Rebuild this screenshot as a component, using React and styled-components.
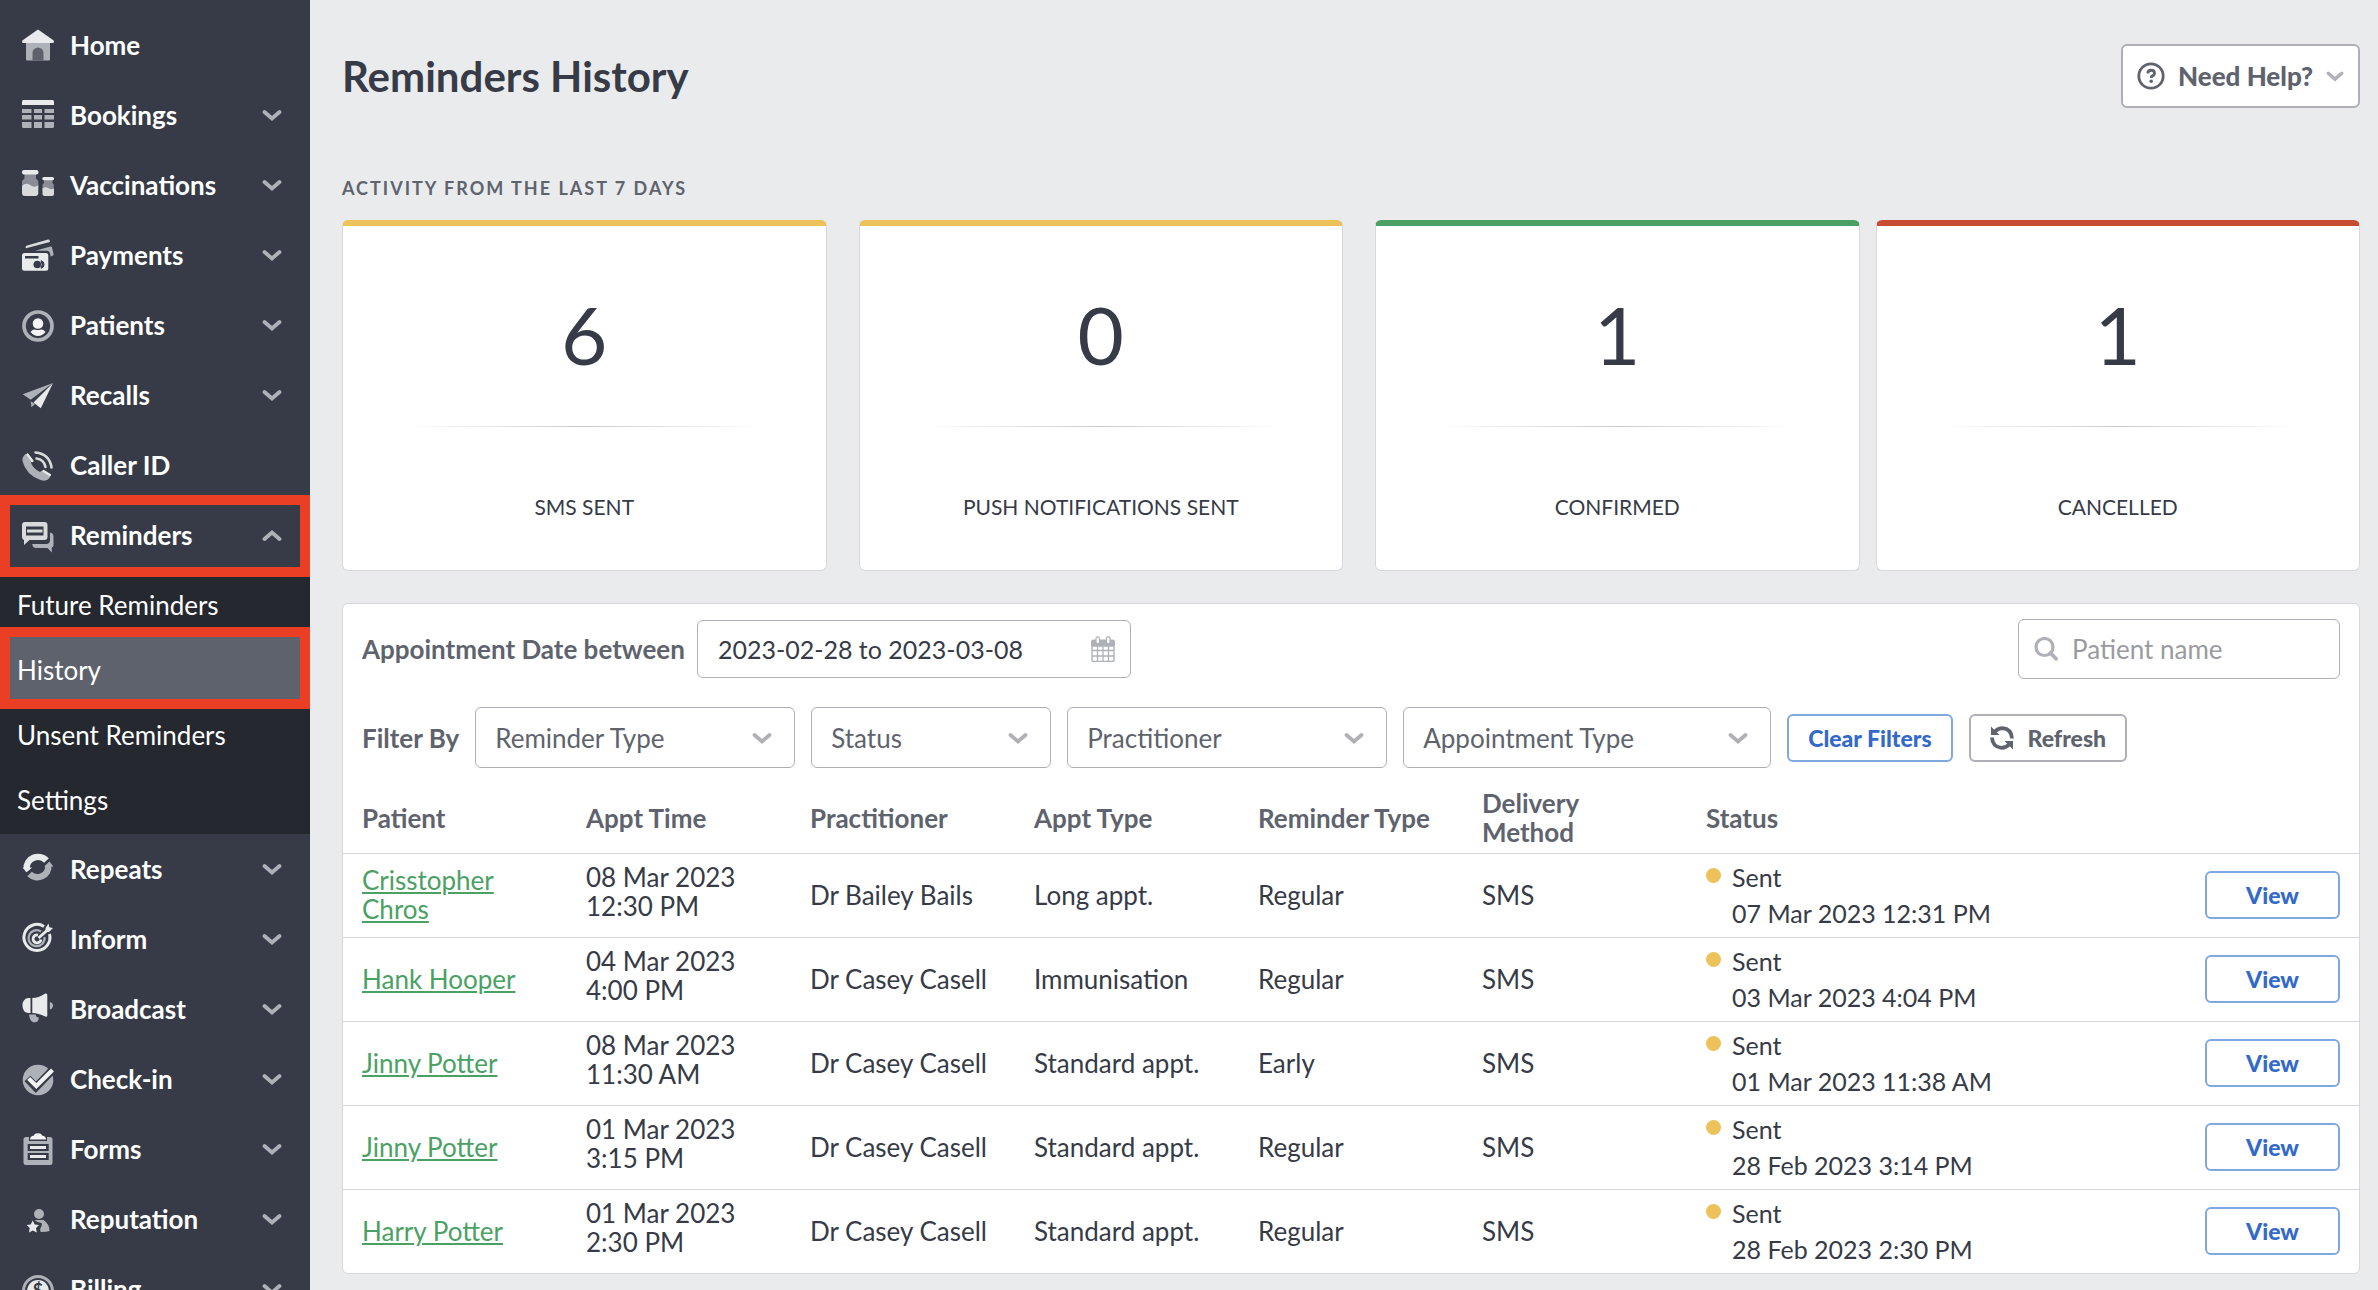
import React from 'react';
import styled, { createGlobalStyle, ThemeProvider } from 'styled-components';

const theme = {
  colors: {
    page: '#e9ebed',
    sidebar: '#363b47',
    submenu: '#25282f',
    active: '#5e626d',
    text: '#363b47',
    muted: '#5e636e',
    placeholder: '#999b9f',
    border: '#aeb0b6',
    line: '#d6d8db',
    blue: '#3369c9',
    blueBorder: '#7fa7e0',
    green: '#4ba164',
    yellow: '#edc25a',
    red: '#c64d31',
    marker: '#eb3f25',
    iconLight: '#e9eaec',
    iconMid: '#afb1b8',
  },
  sizes: {
    title: '42px',
    number: '80px',
    text: '26px',
    date: '25px',
    button: '23px',
    label: '21px',
    caption: '18px',
  },
};

const light = theme.colors.iconLight;
const mid = theme.colors.iconMid;
const dark = theme.colors.sidebar;

const icons = {
  home: (
    <>
      <path d="M4 13h24v17.5q0 1-1 1H5q-1 0-1-1z" fill={mid} />
      <path d="M10.5 31.5V24a5.5 5.5 0 0 1 11 0v7.5z" fill={theme.colors.active} />
      <path d="M16 .5 31 11q1 .7 1 1.5 0 1.5-1.5 1.5h-29Q0 14 0 12.500 0 11.700 1 11z" fill={light} />
    </>
  ),
  bookings: (
    <>
      <path d="M1.5 1h29Q32 1 32 2.500V6H0V2.500Q0 1 1.500 1z" fill={light} />
      <path
        d="M0 10h9.500v4H0zM12 10h8v4h-8zM22.500 10H32v4h-9.500zM0 16h9.500v4.500H0zM12 16h8v4.500h-8zM22.500 16H32v4.500h-9.500zM0 23h9.500v6H1.500Q0 29 0 27.500zM12 23h8v6h-8zM22.500 23H32v4.500q0 1.500-1.500 1.500h-8z"
        fill={mid}
      />
    </>
  ),
  vaccinations: (
    <>
      <path d="M2.500 4h11.500v5.500l2.300 2.500v6H0v-6l2.500-2.500z" fill="#8a8d96" />
      <path d="M0 17q4-4 8-1 4 3 8.300.5V24q0 3-3 3H3q-3 0-3-3z" fill="#d8dadc" />
      <rect x="0" y="1" width="16.500" height="4.500" rx="2" fill={light} />
      <path d="M22 10h8.500v4l1.300 1.500V22H20.500v-6.500L22 14z" fill="#8a8d96" />
      <path d="M20.500 19.500q3-2 5.500-.5 3 2 6 .5V25q0 2-2 2h-7.500q-2 0-2-2z" fill="#d8dadc" />
      <rect x="20.300" y="8" width="11.700" height="3.300" rx="1.500" fill={light} />
    </>
  ),
  payments: (
    <>
      <path d="M3.500 8.500q0-1.500 1.500-2L26 .5q1.500-.3 1.700 1.300L28 3 4 9.300z" fill="#d8dadc" />
      <path d="M13 11.700 28.500 7.500q1.200-.3 1.500 1l1.500 6.500q.3 1.500-1 1.800l-2 .6q0-5.700-4-5.700z" fill={mid} />
      <rect x="0" y="14" width="26.300" height="17.700" rx="2.500" fill={light} />
      <rect x="3" y="17" width="13.500" height="2.500" fill={dark} />
      <circle cx="15.300" cy="25.500" r="3.800" fill={dark} />
      <path d="M19 21.700a3.900 3.900 0 0 1 0 7.600q2.300-3.800 0-7.600z" fill={dark} stroke={dark} />
    </>
  ),
  patients: (
    <>
      <circle cx="16" cy="17" r="14" fill="none" stroke={mid} strokeWidth="3.700" />
      <circle cx="16" cy="14.500" r="5.300" fill="#f4f4f6" />
      <path d="M8.500 23q2.500-3 5-2.300 2.500.7 5 0 2.500-.7 5 2.300-3.300 4-7.500 4t-7.500-4z" fill="#f4f4f6" />
    </>
  ),
  recalls: (
    <>
      <path d="M31 4 .7 15.300l8 5.500z" fill={mid} />
      <path d="M8.700 22.300 13 25l-3.500 3.300z" fill={mid} />
      <path d="M31 4 11.500 23.500l7.300 5.800z" fill={light} />
    </>
  ),
  caller: (
    <>
      <path
        d="M2 6.500Q4.500 3.500 6.500 6L10 10.500q1 1.500-1 3.500 2.500 6 9 9 2-2 4-1l5 3q2 1.500.5 4-3 4-9 2Q4 26 .5 12 0 8.500 2 6.500z"
        fill={mid}
      />
      <path d="m5.500 5.500 5 6.500M21.500 22l6.500 4" stroke={light} strokeWidth="2.200" strokeLinecap="round" />
      <path d="M14.500 9.500q7.500 1 9 8.500M13.500 3.500Q27.500 5 29.500 18.500" stroke="#d8dadc" strokeWidth="2.600" fill="none" strokeLinecap="round" />
    </>
  ),
  reminders: (
    <>
      <path d="M28 13.500q3.500.5 3.500 4V26q0 2-1.700 2.500v5L25.500 29H14q-3.500 0-3.700-4H24q4 0 4-4z" fill={mid} />
      <path d="M3 3h19.500q3 0 3 3v12q0 3-3 3H7.500L2 26v-5q-2-.5-2-3V6q0-3 3-3z" fill="#d8dadc" />
      <rect x="4" y="7.500" width="17.500" height="9" fill={dark} />
      <rect x="5" y="10.500" width="15.500" height="3" fill="#d8dadc" />
    </>
  ),
  repeats: (
    <>
      <path d="M4.800 15.500A11.300 10.500 0 0 1 24.500 7.500" stroke={light} strokeWidth="6.500" fill="none" />
      <path d="M26.300 12.500A11 10.500 0 0 1 7.500 21" stroke={mid} strokeWidth="6.500" fill="none" />
      <path d="M.5 14.500h9.500L5 20z" fill={light} />
      <path d="M22 13.500h9.500L27 8z" fill={mid} />
      <path d="m4 20.500 6.500-5M21.500 13l6.500-6" stroke={dark} strokeWidth="1.500" />
    </>
  ),
  inform: (
    <>
      <path d="M22 3.500A13 13 0 1 0 27.500 11" stroke={light} strokeWidth="3" fill="none" />
      <path d="M19 8.500A8 8 0 1 0 22.500 14" stroke={mid} strokeWidth="2.200" fill="none" />
      <path d="M16 12a4 4 0 1 0 3 4.500" stroke={light} strokeWidth="2.800" fill="none" />
      <path d="m16.500 15 9-8" stroke={light} strokeWidth="3" />
      <path d="m23.500 5 3-4.500.8 3.800 3.700.7L27 9h-3.500z" fill={light} />
    </>
  ),
  broadcast: (
    <>
      <path d="M8.500 5v15H6Q.5 19 .5 12.500T6 5z" fill={light} />
      <path d="M10.300 5q6 0 13-4.500Q25.300 0 25.300 2v20.500q0 1.800-2 1Q16 20 10.300 20z" fill={light} />
      <path d="M27.800 9q3.200.5 3.200 3.500t-3.200 4z" fill={mid} />
      <path d="M7 21.500h6.500q.3 2.500 3.200 3 .3 5-4.200 5Q8 29.500 7 21.500z" fill={mid} />
    </>
  ),
  checkin: (
    <>
      <circle cx="16" cy="17" r="15.300" fill={mid} />
      <path d="m5.500 15.500 8.300 8.700L31.500 6" stroke={dark} strokeWidth="8" fill="none" />
      <path d="m6.700 15.500 7.600 7.500L30.500 7" stroke="#f4f4f6" strokeWidth="4.200" fill="none" />
    </>
  ),
  forms: (
    <>
      <rect x="1.500" y="4" width="29" height="28" rx="2.500" fill={mid} />
      <path d="M7 3h18v5H7z" fill={dark} />
      <path d="M8 6.500q0-3.500 4-4Q12.500.3 16 .3t4 2.200q4 .5 4 4z" fill="#f4f4f6" />
      <path d="M5.700 11h21v7h-21zM5.700 20h21v7h-21z" fill={dark} />
      <path d="M8 13h16v3H8zM8 22h16v3H8z" fill={light} />
    </>
  ),
  reputation: (
    <>
      <circle cx="17" cy="11" r="5" fill={mid} />
      <path d="M12.500 17h9q6 4 6 11-2.500 1-8 1-2 0-1-4 2-3.500 1-5l-4-1z" fill={mid} />
      <path d="m10.700 17.500 2 4 4.300.6-3 3 .8 4.400-4-2-3.800 2 .7-4.400-3-3 4-.6z" fill={light} />
    </>
  ),
  billing: (
    <>
      <circle cx="16" cy="18" r="14.500" fill="none" stroke={mid} strokeWidth="3" />
      <circle cx="16" cy="18" r="11" fill={light} />
      <text x="16" y="24" textAnchor="middle" fontSize="18" fontWeight="700" fontFamily="Lato" fill={dark}>
        $
      </text>
    </>
  ),
};

const menu = [
  { label: 'Home', icon: 'home' },
  { label: 'Bookings', icon: 'bookings', expandable: true },
  { label: 'Vaccinations', icon: 'vaccinations', expandable: true },
  { label: 'Payments', icon: 'payments', expandable: true },
  { label: 'Patients', icon: 'patients', expandable: true },
  { label: 'Recalls', icon: 'recalls', expandable: true },
  { label: 'Caller ID', icon: 'caller' },
  {
    label: 'Reminders',
    icon: 'reminders',
    expandable: true,
    open: true,
    items: ['Future Reminders', 'History', 'Unsent Reminders', 'Settings'],
  },
  { label: 'Repeats', icon: 'repeats', expandable: true },
  { label: 'Inform', icon: 'inform', expandable: true },
  { label: 'Broadcast', icon: 'broadcast', expandable: true },
  { label: 'Check-in', icon: 'checkin', expandable: true },
  { label: 'Forms', icon: 'forms', expandable: true },
  { label: 'Reputation', icon: 'reputation', expandable: true },
  { label: 'Billing', icon: 'billing', expandable: true },
];

const stats = [
  { value: 6, label: 'SMS sent', color: 'yellow' },
  { value: 0, label: 'Push notifications sent', color: 'yellow' },
  { value: 1, label: 'Confirmed', color: 'green' },
  { value: 1, label: 'Cancelled', color: 'red' },
];

const filters = [
  { label: 'Reminder Type', width: 320 },
  { label: 'Status', width: 240 },
  { label: 'Practitioner', width: 320 },
  { label: 'Appointment Type', width: 368 },
];

const columns = ['Patient', 'Appt Time', 'Practitioner', 'Appt Type', 'Reminder Type', 'Delivery Method', 'Status'];

const rows = [
  ['Crisstopher Chros', '08 Mar 2023', '12:30 PM', 'Dr Bailey Bails', 'Long appt.', 'Regular', '07 Mar 2023 12:31 PM'],
  ['Hank Hooper', '04 Mar 2023', '4:00 PM', 'Dr Casey Casell', 'Immunisation', 'Regular', '03 Mar 2023 4:04 PM'],
  ['Jinny Potter', '08 Mar 2023', '11:30 AM', 'Dr Casey Casell', 'Standard appt.', 'Early', '01 Mar 2023 11:38 AM'],
  ['Jinny Potter', '01 Mar 2023', '3:15 PM', 'Dr Casey Casell', 'Standard appt.', 'Regular', '28 Feb 2023 3:14 PM'],
  ['Harry Potter', '01 Mar 2023', '2:30 PM', 'Dr Casey Casell', 'Standard appt.', 'Regular', '28 Feb 2023 2:30 PM'],
];

const GlobalStyle = createGlobalStyle`
  * {
    box-sizing: border-box;
  }

  body {
    margin: 0;
    background: ${theme.colors.page};
    color: ${theme.colors.text};
    font-family: Lato, sans-serif;
    font-size: ${theme.sizes.text};
  }

  button, input, select {
    font-family: inherit;
    font-size: inherit;
    color: inherit;
  }
`;

const Layout = styled.div`
  display: flex;
  height: 100vh;
`;

const Sidebar = styled.nav`
  flex: none;
  width: 310px;
  padding-top: 10px;
  overflow: hidden;
  background: ${({ theme }) => theme.colors.sidebar};
`;

const MenuList = styled.ul`
  margin: 0;
  padding: 0;
  list-style: none;
`;

const MenuButton = styled.button`
  position: relative;
  display: flex;
  align-items: center;
  gap: 16px;
  width: 100%;
  height: 70px;
  padding: 0 28px 0 22px;
  border: 0;
  background: none;
  color: #fff;
  font-size: ${({ theme }) => theme.sizes.text};
  font-weight: 700;
  text-align: left;
  cursor: pointer;
`;

const MenuLabel = styled.span`
  flex: 1;
`;

const MenuIcon = styled.svg`
  flex: none;
  width: 32px;
  height: 32px;
  overflow: visible;
`;

const Submenu = styled.ul`
  margin: 0;
  padding: 2px 0;
  list-style: none;
  background: ${({ theme }) => theme.colors.submenu};
`;

const SubmenuLink = styled.a`
  position: relative;
  display: flex;
  align-items: center;
  height: 65px;
  padding: 0 17px;
  background: ${({ theme, $active }) => ($active ? theme.colors.active : 'none')};
  color: #fff;
  text-decoration: none;
`;

const Marker = styled.span`
  position: absolute;
  z-index: 1;
  top: ${({ $top }) => $top}px;
  left: 0;
  right: 0;
  height: 82px;
  border: 10px solid ${({ theme }) => theme.colors.marker};
`;

const SubmenuText = styled.span`
  position: relative;
  z-index: 2;
`;

const Main = styled.main`
  flex: 1;
  min-width: 0;
  padding: 44px 18px 0 32px;
  overflow: auto;
`;

const Header = styled.header`
  display: flex;
  align-items: center;
  justify-content: space-between;
`;

const Title = styled.h1`
  margin: 0;
  font-size: ${({ theme }) => theme.sizes.title};
  font-weight: 700;
  line-height: 64px;
`;

const Button = styled.button`
  display: flex;
  align-items: center;
  justify-content: center;
  gap: 14px;
  height: 48px;
  padding: 0 19px;
  border: 2px solid ${({ theme, $blue }) => ($blue ? theme.colors.blueBorder : theme.colors.border)};
  border-radius: 6px;
  background: #fff;
  color: ${({ theme, $blue }) => ($blue ? theme.colors.blue : theme.colors.muted)};
  font-size: ${({ theme }) => theme.sizes.button};
  font-weight: 900;
  cursor: pointer;
`;

const HelpButton = styled(Button)`
  gap: 13px;
  height: 64px;
  padding: 0 14px;
  font-size: ${({ theme }) => theme.sizes.text};
`;

const ViewButton = styled(Button)`
  width: 135px;
  margin-left: auto;
`;

const SectionTitle = styled.h2`
  margin: 68px 0 20px;
  color: ${({ theme }) => theme.colors.muted};
  font-size: ${({ theme }) => theme.sizes.caption};
  font-weight: 700;
  letter-spacing: 2px;
  line-height: 24px;
  text-transform: uppercase;
`;

const Stats = styled.section`
  display: flex;
  gap: 16px;
`;

const Card = styled.article`
  display: flex;
  flex: 1 1 0;
  flex-direction: column;
  align-items: center;
  padding: 0 60px;
  border: 1px solid ${({ theme }) => theme.colors.line};
  border-top: 6px solid ${({ theme, $color }) => theme.colors[$color]};
  border-radius: 6px;
  background: #fff;

  &:nth-child(-n + 2) {
    margin-right: 16px;
  }
`;

const CardValue = styled.div`
  padding: 58px 0 42px;
  font-size: ${({ theme }) => theme.sizes.number};
  line-height: 100px;
`;

const Divider = styled.div`
  width: 100%;
  height: 1px;
  background: linear-gradient(90deg, transparent, #c9cbce, transparent);
`;

const CardLabel = styled.div`
  padding: 64px 0 47px;
  font-size: ${({ theme }) => theme.sizes.label};
  line-height: 32px;
  text-transform: uppercase;
`;

const Panel = styled.section`
  margin-top: 32px;
  border: 1px solid ${({ theme }) => theme.colors.line};
  border-radius: 6px;
  background: #fff;
`;

const Toolbar = styled.div`
  display: flex;
  align-items: center;
  gap: ${({ $spaced }) => ($spaced ? 16 : 12)}px;
  padding: ${({ $spaced }) => ($spaced ? '28px 19px 16px' : '15px 19px 0')};
`;

const FieldLabel = styled.label`
  color: ${({ theme }) => theme.colors.muted};
  font-weight: 700;
`;

const Field = styled.div`
  display: flex;
  align-items: center;
  gap: 14px;
  width: ${({ $width }) => $width}px;
  height: ${({ $height }) => $height}px;
  padding: 0 15px;
  border: 1px solid ${({ theme }) => theme.colors.border};
  border-radius: 6px;
`;

const SearchField = styled(Field)`
  margin-left: auto;
`;

const TextInput = styled.input`
  flex: 1;
  min-width: 0;
  padding: 0 5px;
  border: 0;
  outline: 0;
  background: none;
  font-size: ${({ theme }) => theme.sizes.date};

  &::placeholder {
    color: ${({ theme }) => theme.colors.placeholder};
    opacity: 1;
  }
`;

const SearchInput = styled(TextInput)`
  padding: 0;
  font-size: ${({ theme }) => theme.sizes.text};
`;

const SelectBox = styled.div`
  display: grid;
  align-items: center;
  width: ${({ $width }) => $width}px;

  > * {
    grid-area: 1 / 1;
  }

  > svg {
    justify-self: end;
    margin-right: 23px;
    pointer-events: none;
  }
`;

const Select = styled.select`
  width: 100%;
  height: 61px;
  padding: 0 19px;
  border: 1px solid ${({ theme }) => theme.colors.border};
  border-radius: 6px;
  background: #fff;
  color: ${({ theme }) => theme.colors.muted};
  appearance: none;
`;

const Table = styled.table`
  width: 100%;
  border-collapse: collapse;
  table-layout: fixed;
`;

const Th = styled.th`
  width: ${({ $wide }) => ($wide ? 'auto' : '224px')};
  height: 69px;
  padding: 0 64px 0 0;
  color: ${({ theme }) => theme.colors.muted};
  font-weight: 700;
  line-height: 29px;
  text-align: left;
  white-space: ${({ $wrap }) => ($wrap ? 'normal' : 'nowrap')};

  &:first-child {
    width: 243px;
    padding-left: 19px;
  }
`;

const Td = styled.td`
  height: 84px;
  padding: 0 19px 0 0;
  border-top: 1px solid ${({ theme }) => theme.colors.line};
  line-height: 29px;

  &:first-child {
    padding: 0 60px 0 19px;
  }
`;

const TimeCell = styled(Td)`
  padding-bottom: 7px;
`;

const PatientLink = styled.a`
  color: ${({ theme }) => theme.colors.green};
  text-decoration: underline;
`;

const Status = styled.div`
  display: flex;
  gap: 11px;
  font-size: ${({ theme }) => theme.sizes.date};
  line-height: 36px;
`;

const Dot = styled.span`
  flex: none;
  width: 15px;
  height: 15px;
  margin-top: 9px;
  border-radius: 50%;
  background: ${({ theme }) => theme.colors.yellow};
`;

const Chevron = ({ up = false, size = 20 }) => (
  <svg width={size} height={size} viewBox="0 0 20 20" aria-hidden="true">
    <path
      d={up ? 'M2.500 14 10 7.500l7.500 6.500' : 'M2.500 7 10 13.500 17.500 7'}
      fill="none"
      stroke={mid}
      strokeWidth="3.800"
      strokeLinecap="round"
    />
  </svg>
);

const HelpIcon = () => (
  <svg width="28" height="28" viewBox="0 0 28 28" fill="none" stroke="currentColor" aria-hidden="true">
    <circle cx="14" cy="14" r="12.200" strokeWidth="2.800" />
    <path d="M10.800 11.300Q11 8.300 14.200 8.300T17.500 11.200Q17.500 13 15.500 13.800 14.200 14.400 14.200 16" strokeWidth="2.900" />
    <circle cx="14.200" cy="19.300" r="1.800" fill="currentColor" stroke="none" />
  </svg>
);

const CalendarIcon = () => (
  <svg width="24" height="26" viewBox="0 0 24 26" fill="none" stroke={mid} aria-hidden="true">
    <path d="M1 10h22v14q0 1.500-1.500 1.500h-19Q1 25.500 1 24z" strokeWidth="1.400" />
    <path d="M0 10V6q0-2.500 2.500-2.500h19Q24 3.500 24 6v4z" fill={mid} stroke="none" />
    <path d="M1 14.500h22M1 20h22M6.500 10v15M12 10v15M17.500 10v15" strokeWidth="1.300" />
    <rect x="5" y=".8" width="3.500" height="7" rx="1.700" fill="#fff" strokeWidth="1.200" />
    <rect x="15.500" y=".8" width="3.500" height="7" rx="1.700" fill="#fff" strokeWidth="1.200" />
  </svg>
);

const SearchIcon = () => (
  <svg width="24" height="24" viewBox="0 0 24 24" fill="none" stroke={mid} aria-hidden="true">
    <circle cx="10.500" cy="10" r="8.500" strokeWidth="3.200" />
    <path d="m16.500 16 5.500 5.800" strokeWidth="3.800" strokeLinecap="round" />
  </svg>
);

const RefreshIcon = () => (
  <svg width="24" height="24" viewBox="0 0 24 24" fill="none" stroke="currentColor" aria-hidden="true">
    <path d="M5 5.500Q8 2.200 12.500 2.200 21.500 3 22 12.500M19 18.500q-3 3.300-7.500 3.300Q2.500 21 2 11.500" strokeWidth="3.800" />
    <path d="M1 .5V9h8.500zM23 23.500V15h-8.500z" fill="currentColor" stroke="none" />
  </svg>
);

const SideMenu = () => (
  <Sidebar>
    <MenuList>
      {menu.map(({ label, icon, expandable, open, items }) => (
        <li key={label}>
          <MenuButton type="button">
            <MenuIcon viewBox="0 0 32 32" aria-hidden="true">
              {icons[icon]}
            </MenuIcon>
            <MenuLabel>{label}</MenuLabel>
            {expandable && <Chevron up={open} />}
            {open && <Marker $top={-5} />}
          </MenuButton>
          {items && (
            <Submenu>
              {items.map((item) => (
                <li key={item}>
                  <SubmenuLink href="#" $active={item === 'History'}>
                    {item === 'History' && <Marker $top={-10} />}
                    <SubmenuText>{item}</SubmenuText>
                  </SubmenuLink>
                </li>
              ))}
            </Submenu>
          )}
        </li>
      ))}
    </MenuList>
  </Sidebar>
);

const RemindersTable = () => (
  <Table>
    <thead>
      <tr>
        {columns.map((column) => (
          <Th key={column} $wide={column === 'Status'} $wrap={column === 'Delivery Method'}>
            {column}
          </Th>
        ))}
        <Th aria-label="Actions" />
      </tr>
    </thead>
    <tbody>
      {rows.map(([patient, date, time, practitioner, type, reminder, sent]) => (
        <tr key={sent}>
          <Td>
            <PatientLink href="#">{patient}</PatientLink>
          </Td>
          <TimeCell>
            {date}
            <br />
            {time}
          </TimeCell>
          <Td>{practitioner}</Td>
          <Td>{type}</Td>
          <Td>{reminder}</Td>
          <Td>SMS</Td>
          <Td>
            <Status>
              <Dot />
              <div>
                Sent
                <br />
                {sent}
              </div>
            </Status>
          </Td>
          <Td>
            <ViewButton type="button" $blue>
              View
            </ViewButton>
          </Td>
        </tr>
      ))}
    </tbody>
  </Table>
);

const App = () => {
  return (
    <ThemeProvider theme={theme}>
      <GlobalStyle />
      <Layout>
        <SideMenu />
        <Main>
          <Header>
            <Title>Reminders History</Title>
            <HelpButton type="button">
              <HelpIcon />
              Need Help?
              <Chevron size={18} />
            </HelpButton>
          </Header>
          <SectionTitle>Activity from the last 7 days</SectionTitle>
          <Stats>
            {stats.map(({ value, label, color }) => (
              <Card key={label} $color={color}>
                <CardValue>{value}</CardValue>
                <Divider />
                <CardLabel>{label}</CardLabel>
              </Card>
            ))}
          </Stats>
          <Panel>
            <Toolbar>
              <FieldLabel htmlFor="dates">Appointment Date between</FieldLabel>
              <Field $width={434} $height={58}>
                <TextInput id="dates" type="text" defaultValue="2023-02-28 to 2023-03-08" />
                <CalendarIcon />
              </Field>
              <SearchField $width={322} $height={60}>
                <SearchIcon />
                <SearchInput type="search" placeholder="Patient name" aria-label="Patient name" />
              </SearchField>
            </Toolbar>
            <Toolbar $spaced>
              <FieldLabel htmlFor="filter-0">Filter By</FieldLabel>
              {filters.map(({ label, width }, index) => (
                <SelectBox key={label} $width={width}>
                  <Select id={`filter-${index}`} aria-label={label}>
                    <option>{label}</option>
                  </Select>
                  <Chevron />
                </SelectBox>
              ))}
              <Button type="button" $blue>
                Clear Filters
              </Button>
              <Button type="button">
                <RefreshIcon />
                Refresh
              </Button>
            </Toolbar>
            <RemindersTable />
          </Panel>
        </Main>
      </Layout>
    </ThemeProvider>
  );
};

export default App;
